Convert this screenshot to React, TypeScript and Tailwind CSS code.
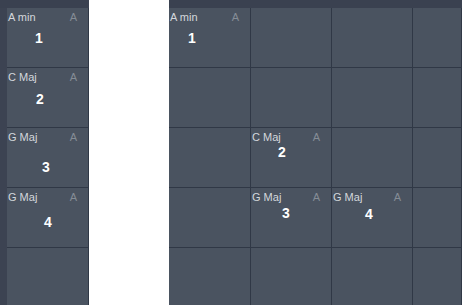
import React from 'react';

type Chord = { name: string; num: string; nx: number; ny: number };

const font = { fontFamily: '"Liberation Sans", Arial, sans-serif' };

const ChordCell: React.FC<{ chord?: Chord; width: string }> = ({ chord, width }) => (
    <div className={`${width} h-[60px] shrink-0 border-r border-b border-[#303846] bg-[#4a5360]`}>
        {chord && (
            <div className="flex flex-col">
                <div className="flex items-start justify-between pl-[1px] pr-[11px] pt-[3px] text-[11px] leading-[12px]">
                    <span className="text-[#d3d7dc]">{chord.name}</span>
                    <span className="text-[#858c96]">A</span>
                </div>
                <span
                    className="text-[14px] leading-[14px] font-bold text-white"
                    style={{ marginLeft: chord.nx, marginTop: chord.ny }}
                >
                    {chord.num}
                </span>
            </div>
        )}
    </div>
);

const leftChords: Chord[] = [
    { name: 'A min', num: '1', nx: 28, ny: 8 },
    { name: 'C Maj', num: '2', nx: 29, ny: 9 },
    { name: 'G Maj', num: '3', nx: 35, ny: 17 },
    { name: 'G Maj', num: '4', nx: 37, ny: 12 },
];

const gridRows: (Chord | undefined)[][] = [
    [{ name: 'A min', num: '1', nx: 19, ny: 8 }, undefined, undefined, undefined],
    [undefined, undefined, undefined, undefined],
    [undefined, { name: 'C Maj', num: '2', nx: 27, ny: 2 }, undefined, undefined],
    [undefined, { name: 'G Maj', num: '3', nx: 31, ny: 3 }, { name: 'G Maj', num: '4', nx: 33, ny: 4 }, undefined],
    [undefined, undefined, undefined, undefined],
];

const colWidths = ['w-[82px]', 'w-[81px]', 'w-[81px]', 'w-[49px]'];

const App: React.FC = () => {
    return (
        <div className="flex w-[462px] h-[305px] overflow-hidden bg-white" style={font}>
            {/* Left chord column */}
            <div className="flex flex-col w-[89px] shrink-0">
                <div className="h-[8px] shrink-0 bg-[#3a4150]" />
                <div className="flex shrink-0">
                    <div className="w-[7px] h-[297px] bg-[#3c4352]" />
                    <div className="flex flex-col">
                        {leftChords.map((c, i) => (
                            <ChordCell key={i} chord={c} width="w-[82px]" />
                        ))}
                        <ChordCell width="w-[82px]" />
                    </div>
                </div>
            </div>

            <div className="w-[80px] shrink-0" />

            {/* Right grid */}
            <div className="flex flex-col flex-1">
                <div className="h-[8px] shrink-0 bg-[#3a4150]" />
                {gridRows.map((row, r) => (
                    <div key={r} className="flex shrink-0">
                        {row.map((c, i) => (
                            <ChordCell key={i} chord={c} width={colWidths[i]} />
                        ))}
                    </div>
                ))}
            </div>
        </div>
    );
};

export default App;
